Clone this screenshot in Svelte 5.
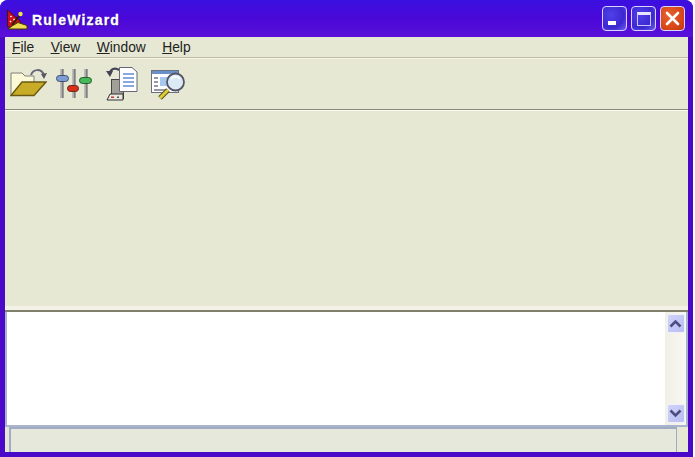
<script lang="ts">
    const menus = [
        { key: "F", rest: "ile" },
        { key: "V", rest: "iew" },
        { key: "W", rest: "indow" },
        { key: "H", rest: "elp" },
    ];
</script>

<div class="window">
    <header class="titlebar">
        <svg class="app-icon" width="22" height="22" viewBox="7 9 22 22">
            <path d="M7.5 10 L7.5 27 L22 27 L20 21 Z" fill="#c81020" stroke="#501010" stroke-width="1" />
            <path d="M10.5 16 l1 1 M10 21 l1 1 M13.5 19 l1 1" stroke="#fff" stroke-width="1.5" />
            <path d="M12 25 L20 15" stroke="#302000" stroke-width="1.8" />
            <circle cx="20.5" cy="14" r="2.2" fill="#f0e840" />
            <path d="M12 26 L18 22.5 L27 25.5 L27 29 L8 29 Z" fill="#f0dc50" stroke="#403800" stroke-width="1" />
        </svg>
        <span class="title">RuleWizard</span>
        <div class="caption-buttons">
            <button class="cap min" aria-label="Minimize"><span></span></button>
            <button class="cap max" aria-label="Maximize"><span></span></button>
            <button class="cap close" aria-label="Close">
                <svg width="17" height="17" viewBox="0 0 17 17"><path d="M3 3 L14 14 M14 3 L3 14" stroke="#fff" stroke-width="2.6" stroke-linecap="round" /></svg>
            </button>
        </div>
    </header>

    <div class="body">
        <nav class="menubar">
            {#each menus as m}
                <span class="menu"><u>{m.key}</u>{m.rest}</span>
            {/each}
        </nav>

        <div class="toolbar">
            <svg class="tool" width="37" height="34" viewBox="10 67 37 34">
                <path d="M31 75 C33 69 41 68 44 75" fill="none" stroke="#667" stroke-width="2" />
                <path d="M41 74 L47 73 L44 79 Z" fill="#556" />
                <path d="M11 73 L11 95 L20 95 L34 82 L34 76 L25 76 L22 73 Z" fill="#fbf9d8" stroke="#808078" stroke-width="1" />
                <path d="M11 95.5 L22 82 L46 82 L34 95.5 Z" fill="#c8ac28" stroke="#6a5a10" stroke-width="1.4" />
            </svg>
            <svg class="tool" width="37" height="34" viewBox="56 67 37 34">
                <path d="M62 69 V98 M74 69 V98 M86 69 V98" stroke="#808080" stroke-width="3.4" />
                <path d="M61 69 V98 M73 69 V98 M85 69 V98" stroke="#d8d8d8" stroke-width="1" />
                <rect x="56.5" y="75.5" width="12" height="6" rx="3" fill="#7c9cd4" stroke="#40506c" />
                <rect x="67.5" y="85.5" width="11" height="6" rx="3" fill="#d83018" stroke="#702018" />
                <rect x="79.5" y="77.5" width="12" height="6" rx="3" fill="#48b858" stroke="#206030" />
            </svg>
            <svg class="tool" width="37" height="34" viewBox="102 67 37 34">
                <path d="M119 70 C115 67 110 69 110 74" fill="none" stroke="#445" stroke-width="2.2" />
                <path d="M106 71 L113 71 L110 77 Z" fill="#445" />
                <rect x="111.5" y="79.5" width="12" height="19" fill="#a0a098" stroke="#444" />
                <path d="M107 100 L110 94 L123 94 L123 100 Z" fill="#e8e8e0" stroke="#333" />
                <rect x="111" y="96.5" width="3" height="1.5" fill="#d03030" />
                <rect x="117" y="96.5" width="2" height="1.5" fill="#555" />
                <path d="M119.5 67.5 L132 67.5 L137 72 L137 91.5 L119.5 91.5 Z" fill="#fff" stroke="#667" />
                <path d="M123 74 H134 M123 78 H134 M123 82 H134 M123 86 H134" stroke="#88a8e0" stroke-width="2" />
            </svg>
            <svg class="tool" width="40" height="34" viewBox="148 67 40 34">
                <rect x="151.5" y="70.5" width="27" height="22" fill="#fff" stroke="#6a7080" />
                <rect x="152" y="71" width="26" height="3" fill="#6a90c8" />
                <rect x="160" y="77" width="14" height="9" fill="#a8c8f0" />
                <path d="M154 78 H158 M154 82 H158 M154 86 H158 M154 90 H166" stroke="#778" stroke-width="1.4" />
                <path d="M160 98 L168 90" stroke="#55501a" stroke-width="5" />
                <path d="M160 98 L168 90" stroke="#e0cc38" stroke-width="3" />
                <circle cx="175.5" cy="82" r="8.5" fill="#dceaf6" stroke="#556" stroke-width="1.8" />
                <path d="M171 79 A5.5 5.5 0 0 1 180 79" fill="none" stroke="#fff" stroke-width="1.6" />
            </svg>
        </div>

        <div class="client"></div>
        <div class="splitter"></div>

        <div class="log">
            <div class="log-space"></div>
            <div class="scrollbar">
                <button class="arrow" aria-label="Scroll up">
                    <svg width="13" height="9" viewBox="0 0 13 9"><path d="M1.5 7.5 L6.5 2.5 L11.5 7.5" fill="none" stroke="#4c4c80" stroke-width="2.6" /></svg>
                </button>
                <div class="track"></div>
                <button class="arrow" aria-label="Scroll down">
                    <svg width="13" height="9" viewBox="0 0 13 9"><path d="M1.5 1.5 L6.5 6.5 L11.5 1.5" fill="none" stroke="#4c4c80" stroke-width="2.6" /></svg>
                </button>
            </div>
        </div>

        <footer class="statusbar">
            <div class="status-pane"></div>
        </footer>
    </div>
</div>

<style>
    :global(body) {
        margin: 0;
        background: #fff;
    }

    .window {
        width: 693px;
        height: 457px;
        box-sizing: border-box;
        display: flex;
        flex-direction: column;
        padding: 0 5px 5px 5px;
        background: #4a08c8;
        border-radius: 8px 8px 0 0;
        overflow: hidden;
        font-family: "Liberation Sans", Arial, sans-serif;
    }

    .titlebar {
        height: 37px;
        flex: none;
        box-sizing: border-box;
        display: flex;
        align-items: center;
        gap: 3px;
        margin: 0 -5px;
        padding: 2px 8px 0 7px;
        background: linear-gradient(#3a10e0, #4a08d8 50%, #5a10d8);
    }

    .app-icon {
        flex: none;
    }

    .title {
        color: #fff;
        font-size: 14px;
        font-weight: 700;
        letter-spacing: 1.2px;
        -webkit-text-stroke: 0.3px #fff;
        text-shadow: 1px 1px 0 #2a0890;
    }

    .caption-buttons {
        margin-left: auto;
        display: flex;
        gap: 4px;
        margin-top: -2px;
    }

    .cap {
        width: 25px;
        height: 25px;
        box-sizing: border-box;
        padding: 0;
        border: 1px solid #d8d4ff;
        border-radius: 4px;
        background: radial-gradient(circle at 35% 35%, #5040e8, #3c28d0 60%, #6a60ee);
        display: flex;
        align-items: center;
        justify-content: center;
    }

    .min span {
        width: 8px;
        height: 4px;
        background: #fff;
        margin: 9px 6px 0 0;
    }

    .max span {
        width: 14px;
        height: 14px;
        box-sizing: border-box;
        border: 1px solid #c8c4ff;
        border-top: 3px solid #e8e4ff;
    }

    .close {
        background: radial-gradient(circle at 35% 35%, #e86030, #d84818 60%, #c03810);
    }

    .body {
        flex: 1;
        min-height: 0;
        display: flex;
        flex-direction: column;
        background: #e6e8d4;
    }

    .menubar {
        height: 21px;
        flex: none;
        box-sizing: border-box;
        display: flex;
        align-items: center;
        gap: 16.4px;
        padding-left: 7px;
        border-bottom: 1px solid #bcbca8;
        font-size: 13.8px;
        color: #222;
    }

    .toolbar {
        height: 52px;
        flex: none;
        display: flex;
        align-items: center;
        box-sizing: border-box;
        padding-left: 5px;
        gap: 9px;
        border-top: 1px solid #f6f6ea;
        border-bottom: 1px solid #8a8a78;
    }

    .tool {
        flex: none;
    }

    .client {
        flex: 1;
        border-top: 1px solid #fafaf0;
    }

    .splitter {
        height: 6px;
        flex: none;
        box-sizing: border-box;
        background: #f2f3e6;
        border-bottom: 2px solid #80806c;
    }

    .log {
        height: 115px;
        flex: none;
        box-sizing: border-box;
        display: flex;
        background: #fff;
        border-left: 2px solid #a8b4cc;
        border-right: 2px solid #a8b4cc;
        border-bottom: 2px solid #a8b4cc;
    }

    .log-space {
        flex: 1;
    }

    .scrollbar {
        width: 21px;
        flex: none;
        display: flex;
        flex-direction: column;
        align-items: center;
        padding: 2px 0 2px;
        box-sizing: border-box;
        background: linear-gradient(90deg, #f0f0e6, #f8f8f2);
    }

    .arrow {
        width: 18px;
        height: 19px;
        box-sizing: border-box;
        padding: 0;
        border: 1px solid #f0f0ff;
        border-radius: 2px;
        background: linear-gradient(135deg, #d0d4fa, #b8bcf2);
        display: flex;
        align-items: center;
        justify-content: center;
    }

    .track {
        flex: 1;
    }

    .statusbar {
        height: 25px;
        flex: none;
        box-sizing: border-box;
        display: flex;
        padding: 0 11px 0 4px;
    }

    .status-pane {
        flex: 1;
        background: #e6e8dc;
        border: 2px solid #a0acc4;
        border-bottom: none;
        border-right-width: 1px;
    }
</style>
